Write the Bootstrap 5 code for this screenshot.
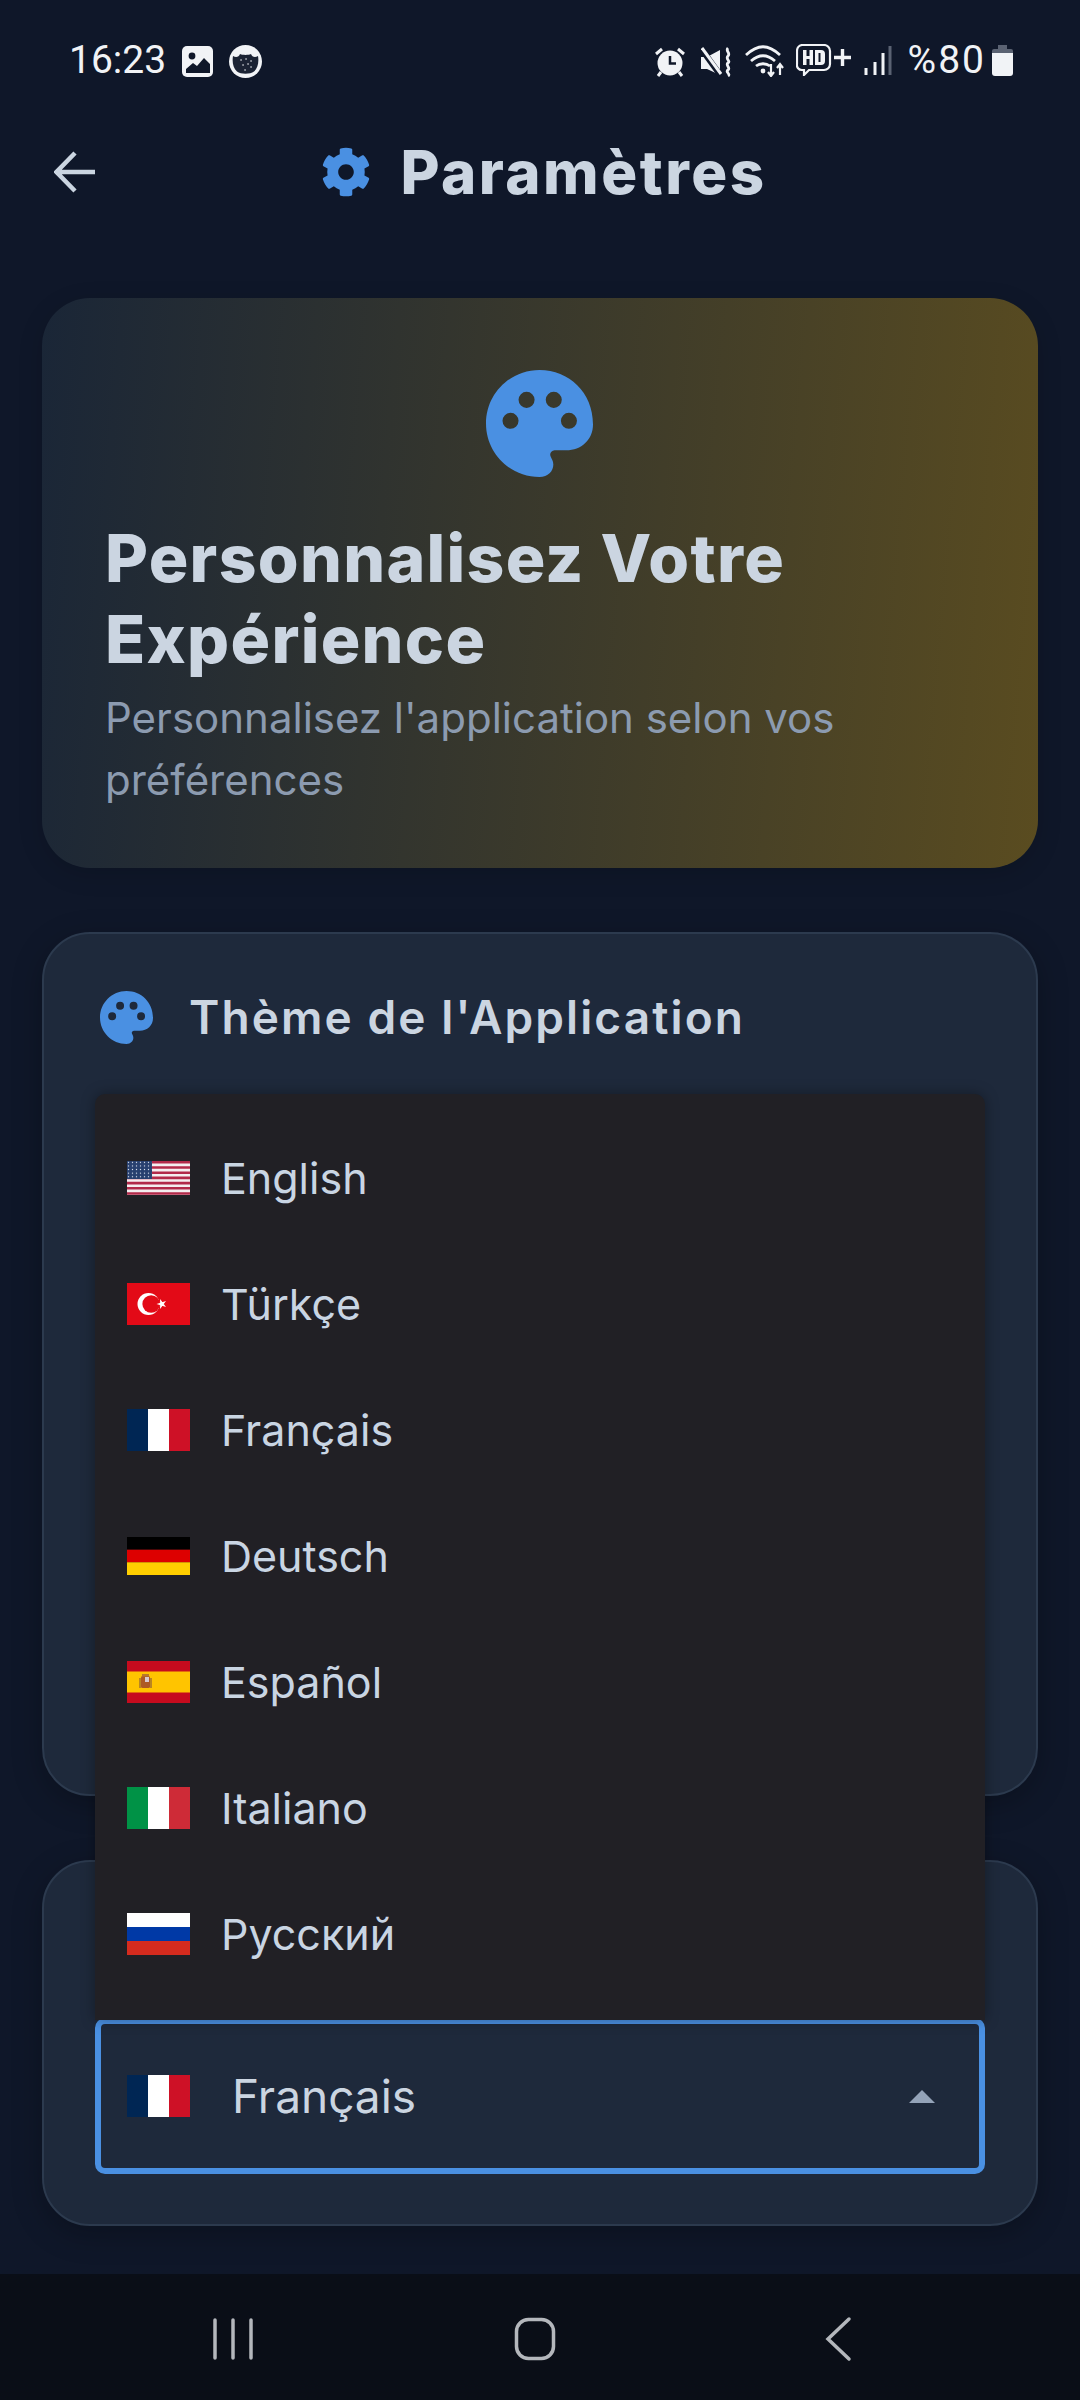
<!DOCTYPE html>
<html lang="fr">
<head>
    <meta charset="UTF-8">
    <meta name="viewport" content="width=device-width, initial-scale=1.0">
    <title>Paramètres</title>
    <link href="https://cdn.jsdelivr.net/npm/bootstrap@5.3.0/dist/css/bootstrap.min.css" rel="stylesheet">
    <style>
        body { background: #0f1729; font-family: Inter, "Liberation Sans", sans-serif; }
        .app-screen { width: 1080px; height: 2400px; overflow: hidden; background: #0f1729; }
        .status-row { height: 120px; padding: 44px 67px 0 69px; color: #f1f3f6; font-family: Roboto, sans-serif; font-size: 39px; line-height: 32px; }
        .status-row svg { display: block; flex: none; }
        .st-1 { margin-top: 1px; }
        .st-2 { margin-top: 2px; }
        .st-3 { margin-top: 3px; }
        .st-gap-6 { margin-left: 6px; }
        .st-gap-11 { margin-left: 11px; }
        .st-gap-12 { margin-left: 12px; }
        .st-gap-14 { margin-left: 14px; }
        .st-gap-16 { margin-left: 16px; }
        .st-pct { letter-spacing: 2px; }
        .top-bar { height: 104px; padding: 0 0 0 54px; }
        .back-link { width: 41px; flex: none; }
        .page-title { flex: 1; gap: 29px; padding-right: 87px; margin: 0; color: #cbd5e1; font-weight: 800; font-size: 60px; letter-spacing: 2.500px; }
        .hero-box { margin: 74px 42px 0; height: 570px; padding: 72px 64px 0 63px; border-radius: 48px; background: linear-gradient(95deg, #1a2637 0%, #5a4c20 100%); box-shadow: 0 6px 24px rgba(0,0,0,.15); }
        .hero-title { margin: 41px 0 0; color: #cbd5e1; font-size: 66px; line-height: 81px; font-weight: 800; letter-spacing: 1.300px; }
        .hero-text { margin: 7px 0 0; color: #8c9bb0; font-size: 42px; line-height: 62px; }
        .panel-box { margin: 64px 42px 0; padding: 0 51px; background: #1e293b; border: 2px solid #2c3a4e; border-radius: 48px; box-shadow: 0 8px 30px rgba(0,0,0,.25); }
        .theme-panel { height: 864px; padding-top: 55px; }
        .lang-panel { height: 366px; }
        .panel-title { gap: 36px; margin: 0 0 0 5px; color: #cbd5e1; font-size: 46px; font-weight: 600; line-height: 56px; letter-spacing: 2.100px; }
        .lang-select { position: relative; margin-top: 156px; }
        .select-box { height: 156px; width: 100%; padding: 0 44px 0 26px; background: #1e293b; border: 6px solid #4a90e2; border-radius: 10px; color: #cbd5e1; font-size: 46px; text-align: left; }
        .select-box .flag-box { margin-right: 42px; }
        .select-arrow { width: 0; height: 0; margin-left: auto; border-left: 13px solid transparent; border-right: 13px solid transparent; border-bottom: 13px solid #94a3b8; }
        .lang-menu { position: absolute; left: 0; right: 0; bottom: 100%; margin-bottom: -2px; padding: 21px 0 23px; display: block; background: #212025; border: 0; border-radius: 10px 10px 0 0; box-shadow: 0 0 14px rgba(0,0,0,.35); }
        .lang-menu .dropdown-item { height: 126px; padding: 0 32px; gap: 31px; color: #c9d5e3; font-size: 43px; }
        .flag-box { width: 63px; flex: none; display: flex; align-items: center; }
        .flag-box svg { display: block; width: 63px; }
        .nav-strip { height: 126px; background: #0a0e17; margin-top: auto; position: relative; }
        .nav-strip svg { display: block; }
    </style>
</head>
<body>
<div class="app-screen d-flex flex-column">
    <div class="status-row d-flex align-items-start">
        <span>16:23</span>
        <svg class="ms-3 st-2" width="31" height="31" viewBox="0 0 31 31"><rect width="31" height="31" rx="5" fill="#f1f3f6"/><circle cx="10" cy="10" r="3.400" fill="#0f1729"/><path d="M4 27v-4l7-6 4 3 7-8 6 6v9z" fill="#0f1729"/></svg>
        <svg class="ms-3 st-1" width="33" height="33" viewBox="0 0 33 33"><circle cx="16.500" cy="16.500" r="16.500" fill="#f1f3f6"/><path d="M4 11c3 2 6 1 7-2 3 1.200 8 1.200 11 0 1 3 4 4 7 2 1 6 0 12-4 15.500-4 3-13 3-17 0-4-3.500-5-9.500-4-15.500z" fill="#1b2334"/><path d="M12 15h.1M17 14h.1M22 16h.1M14 20h.1M19 19h.1M16 25h.1M22 22h.1" stroke="#f1f3f6" stroke-width="1.500" stroke-linecap="round"/></svg>
        <svg class="ms-auto st-3" width="30" height="30" viewBox="0 0 30 30"><circle cx="15" cy="16" r="12.500" fill="#f1f3f6"/><path d="M15 9v7.500h6" fill="none" stroke="#0f1729" stroke-width="2.500"/><path d="M1 7l6-5M29 7l-6-5M6 25l-3 4M24 25l3 4" stroke="#f1f3f6" stroke-width="3"/></svg>
        <svg class="st-gap-16 st-3" width="30" height="30" viewBox="0 0 30 30"><path d="M0 10h6l13-7v25l-13-6H0z" fill="#f1f3f6"/><path d="M-1 0l21 29" stroke="#0f1729" stroke-width="6"/><path d="M1 1l19 26" stroke="#f1f3f6" stroke-width="3"/><path d="M27 1c-3 3 3 5 0 8s3 5 0 7 3 5 0 7 3 4 0 6" fill="none" stroke="#f1f3f6" stroke-width="2.800"/></svg>
        <svg class="st-gap-14" width="40" height="33" viewBox="0 0 40 33"><path d="M1 11c12-11 22-11 34 0M6 17c8-7 16-7 24 0M11 22c4-3 10-3 14 0" fill="none" stroke="#f1f3f6" stroke-width="2.800"/><circle cx="18" cy="27" r="2.400" fill="#f1f3f6"/><path d="M26 20v12m-3-4 3 4 3-4M35 31V20m-3 4 3-4 3 4" fill="none" stroke="#f1f3f6" stroke-width="2.200"/></svg>
        <svg class="st-gap-11" width="56" height="32" viewBox="0 0 56 32"><path d="M6 1h22a6 6 0 0 1 6 6v13a6 6 0 0 1-6 6H13l-5 5v-5H6a5 5 0 0 1-5-6V7a6 6 0 0 1 5-6z" fill="none" stroke="#f1f3f6" stroke-width="2.200"/><path d="M7 6h3.500v6h3V6H17v15h-3.500v-6h-3v6H7zM19 6h6a4 4 0 0 1 4 4v7a4 4 0 0 1-4 4h-6zm3.500 3v9h2v-9z" fill="#f1f3f6"/><path d="M38 13.500h17M46.500 5v17" stroke="#f1f3f6" stroke-width="3.400"/></svg>
        <svg class="st-gap-12 st-2" width="28" height="30" viewBox="0 0 28 30"><path d="M2 22v7M11 16v13M19 7v22" stroke="#f1f3f6" stroke-width="3"/><path d="M26 0v29" stroke="#5a6272" stroke-width="3"/></svg>
        <span class="st-gap-16 st-pct">%80</span>
        <svg class="st-gap-6 st-1" width="21" height="31" viewBox="0 0 21 31"><path d="M6 0h9v4h4a2 2 0 0 1 2 2v4H0V6a2 2 0 0 1 2-2h4z" fill="#5a6272"/><path d="M0 8h21v20a3 3 0 0 1-3 3H3a3 3 0 0 1-3-3z" fill="#f1f3f6"/></svg>
    </div>

    <div class="top-bar d-flex align-items-center">
        <a href="#" class="back-link d-block">
            <svg width="41" height="42" viewBox="0 0 41 42" class="d-block"><path d="M21 2 2.500 21 21 40M3 21h38" fill="none" stroke="#cbd5e1" stroke-width="4.500"/></svg>
        </a>
        <h1 class="page-title d-flex align-items-center justify-content-center">
            <svg width="50" height="50" viewBox="0 0 512 512"><path fill="#4a90e2" d="M487.4 315.700l-42.600-24.600c4.300-23.200 4.300-47 0-70.200l42.600-24.600c4.900-2.800 7.100-8.600 5.500-14-11.100-35.600-30-67.800-54.700-94.600-3.800-4.100-10-5.100-14.800-2.300L380.800 110c-17.900-15.400-38.500-27.300-60.800-35.100V25.800c0-5.600-3.900-10.500-9.400-11.700-36.700-8.200-74.300-7.800-109.200 0-5.500 1.200-9.400 6.100-9.400 11.700V75c-22.200 7.900-42.800 19.800-60.800 35.100L88.700 85.500c-4.900-2.800-11-1.900-14.800 2.300-24.700 26.700-43.600 58.900-54.700 94.600-1.700 5.400.6 11.200 5.500 14L67.300 221c-4.300 23.200-4.300 47 0 70.200l-42.600 24.600c-4.900 2.800-7.100 8.600-5.500 14 11.100 35.600 30 67.800 54.700 94.600 3.800 4.100 10 5.100 14.800 2.300l42.600-24.600c17.900 15.400 38.500 27.300 60.800 35.100v49.200c0 5.600 3.900 10.500 9.400 11.700 36.700 8.200 74.300 7.800 109.200 0 5.500-1.200 9.400-6.100 9.400-11.700v-49.200c22.200-7.900 42.800-19.800 60.800-35.100l42.600 24.600c4.900 2.800 11 1.900 14.800-2.300 24.700-26.700 43.600-58.900 54.700-94.600 1.500-5.500-.7-11.300-5.600-14.100zM256 336c-44.100 0-80-35.900-80-80s35.900-80 80-80 80 35.900 80 80-35.900 80-80 80z"/></svg>
            Paramètres
        </h1>
    </div>

    <div class="hero-box">
        <svg class="d-block mx-auto" width="107" height="107" viewBox="0 0 24 24"><path fill="#4a90e2" fill-rule="evenodd" d="M12 0C5.370 0 0 5.370 0 12s5.370 12 12 12c1.900 0 3.100-1.300 3.100-2.800 0-.8-.4-1.300-.6-1.800-.3-.7.1-1.300.9-1.400h2.600C21.400 18 24 15.600 24 12.200 24 5 18.600 0 12 0zM9.100 4.900a1.800 1.800 0 1 0 0 3.600 1.800 1.800 0 0 0 0-3.600zm6.100 0a1.800 1.800 0 1 0 0 3.600 1.800 1.800 0 0 0 0-3.600zM5.500 9.600a1.800 1.800 0 1 0 0 3.600 1.800 1.800 0 0 0 0-3.600zm13.100 0a1.800 1.800 0 1 0 0 3.600 1.800 1.800 0 0 0 0-3.600z"/></svg>
        <h2 class="hero-title">Personnalisez Votre Expérience</h2>
        <p class="hero-text">Personnalisez l'application selon vos préférences</p>
    </div>

    <div class="panel-box theme-panel">
        <h3 class="panel-title d-flex align-items-center">
            <svg width="53" height="53" viewBox="0 0 24 24"><path fill="#4a90e2" fill-rule="evenodd" d="M12 0C5.370 0 0 5.370 0 12s5.370 12 12 12c1.900 0 3.100-1.300 3.100-2.800 0-.8-.4-1.300-.6-1.800-.3-.7.1-1.300.9-1.400h2.600C21.400 18 24 15.600 24 12.200 24 5 18.600 0 12 0zM9.100 4.900a1.800 1.800 0 1 0 0 3.600 1.800 1.800 0 0 0 0-3.600zm6.100 0a1.800 1.800 0 1 0 0 3.600 1.800 1.800 0 0 0 0-3.600zM5.500 9.600a1.800 1.800 0 1 0 0 3.600 1.800 1.800 0 0 0 0-3.600zm13.100 0a1.800 1.800 0 1 0 0 3.600 1.800 1.800 0 0 0 0-3.600z"/></svg>
            Thème de l'Application
        </h3>
    </div>

    <div class="panel-box lang-panel">
        <div class="lang-select dropup">
            <ul class="dropdown-menu show lang-menu">
                <li><a class="dropdown-item d-flex align-items-center" href="#">
                    <span class="flag-box"><svg height="34" viewBox="0 0 63 34">
                        <defs><pattern id="usStars" width="4" height="3.600" patternUnits="userSpaceOnUse"><circle cx="1.500" cy="1.300" r=".7" fill="#dfe6f2"/></pattern></defs>
                        <rect width="63" height="34" fill="#f4eef0"/>
                        <path d="M0 1.300h63M0 6.500h63M0 11.700h63M0 16.900h63M0 22.100h63M0 27.300h63M0 32.500h63" stroke="#b22a4a" stroke-width="2.600"/>
                        <rect width="25" height="18" fill="#28406f"/><rect width="25" height="18" fill="url(#usStars)"/>
                    </svg></span>English</a></li>
                <li><a class="dropdown-item d-flex align-items-center" href="#">
                    <span class="flag-box"><svg height="42" viewBox="0 0 63 42">
                        <rect width="63" height="42" fill="#e30a17"/><circle cx="21.500" cy="21" r="11" fill="#fff"/><circle cx="24.200" cy="21" r="8.800" fill="#e30a17"/>
                        <path d="m29.500 21 9.500-3.100-5.900 8v-9.800l5.900 8z" fill="#fff"/>
                    </svg></span>Türkçe</a></li>
                <li><a class="dropdown-item d-flex align-items-center" href="#">
                    <span class="flag-box"><svg height="42" viewBox="0 0 63 42"><rect width="21" height="42" fill="#002654"/><rect x="21" width="21" height="42" fill="#fff"/><rect x="42" width="21" height="42" fill="#ce1126"/></svg></span>Français</a></li>
                <li><a class="dropdown-item d-flex align-items-center" href="#">
                    <span class="flag-box"><svg height="38" viewBox="0 0 63 38"><rect width="63" height="12.700" fill="#000"/><rect y="12.700" width="63" height="12.700" fill="#d00"/><rect y="25.300" width="63" height="12.700" fill="#ffce00"/></svg></span>Deutsch</a></li>
                <li><a class="dropdown-item d-flex align-items-center" href="#">
                    <span class="flag-box"><svg height="42" viewBox="0 0 63 42">
                        <rect width="63" height="42" fill="#c60b1e"/><rect y="10.500" width="63" height="21" fill="#ffc400"/>
                        <rect x="14" y="15" width="9" height="12" rx="1.500" fill="#ad5a24"/><rect x="18" y="16" width="4" height="5" fill="#d8c9d0"/><rect x="15" y="13" width="7" height="2.500" fill="#b9772b"/><path d="M13 17v10M24 17v10" stroke="#a8762a" stroke-width="1.600"/>
                    </svg></span>Español</a></li>
                <li><a class="dropdown-item d-flex align-items-center" href="#">
                    <span class="flag-box"><svg height="42" viewBox="0 0 63 42"><rect width="21" height="42" fill="#009246"/><rect x="21" width="21" height="42" fill="#fff"/><rect x="42" width="21" height="42" fill="#ce2b37"/></svg></span>Italiano</a></li>
                <li><a class="dropdown-item d-flex align-items-center" href="#">
                    <span class="flag-box"><svg height="42" viewBox="0 0 63 42"><rect width="63" height="14" fill="#fff"/><rect y="14" width="63" height="14" fill="#0039a6"/><rect y="28" width="63" height="14" fill="#d52b1e"/></svg></span>Русский</a></li>
            </ul>
            <button type="button" class="select-box btn d-flex align-items-center">
                <span class="flag-box"><svg height="42" viewBox="0 0 63 42"><rect width="21" height="42" fill="#002654"/><rect x="21" width="21" height="42" fill="#fff"/><rect x="42" width="21" height="42" fill="#ce1126"/></svg></span>
                Français
                <span class="select-arrow"></span>
            </button>
        </div>
    </div>

    <div class="nav-strip d-flex align-items-center">
        <svg class="mx-auto" width="1080" height="126" viewBox="0 0 1080 126">
            <path d="M215 46v38M233 46v38M251 46v38" stroke="#b4b7bc" stroke-width="3.500" stroke-linecap="round"/>
            <rect x="516.500" y="45.500" width="37" height="39" rx="12" fill="none" stroke="#b4b7bc" stroke-width="3.500"/>
            <path d="M849 45 828 65l21 20" fill="none" stroke="#b4b7bc" stroke-width="3.500" stroke-linecap="round"/>
        </svg>
    </div>
</div>
<script src="https://cdn.jsdelivr.net/npm/bootstrap@5.3.0/dist/js/bootstrap.bundle.min.js"></script>
</body>
</html>
